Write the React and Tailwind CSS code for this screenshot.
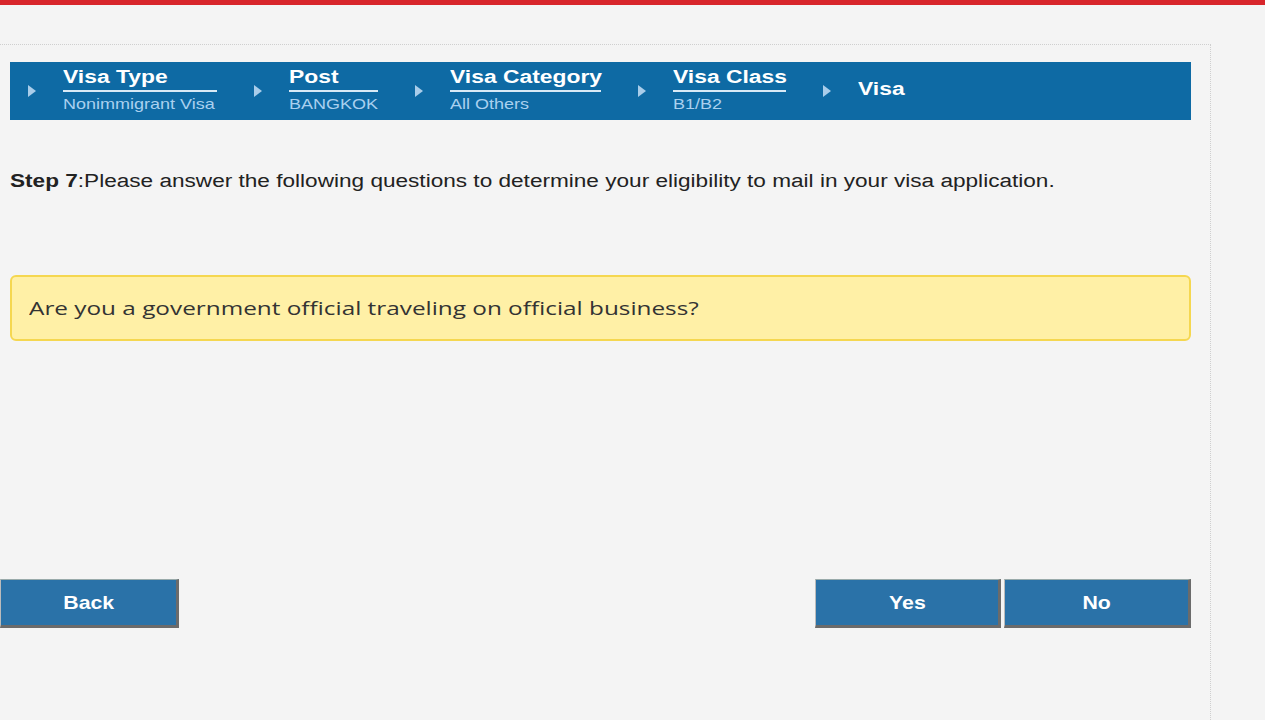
import React from "react";

const steps = [
  { title: "Visa Type", sub: "Nonimmigrant Visa", w: "w-[154px]" },
  { title: "Post", sub: "BANGKOK", w: "w-[89px]" },
  { title: "Visa Category", sub: "All Others", w: "w-[151px]" },
  { title: "Visa Class", sub: "B1/B2", w: "w-[113px]" },
];

const Arrow = () => (
  <svg width="10" height="14" viewBox="0 0 10 14" className="shrink-0">
    <path d="M1 1 L9 7 L1 13 Z" fill="#a9cdea" />
  </svg>
);

const btn =
  "h-[49px] pt-[2px] bg-[#2a72a8] border-t border-l border-t-[#9aa] border-l-[#bbb] border-r-[3px] border-b-[3px] border-r-[#6b6b6b] border-b-[#6b6b6b] text-white font-bold text-[19px]";

const App = () => {
  return (
    <div className="min-h-screen bg-white font-['Liberation_Sans',Arial,sans-serif]">
      <div className="w-[1265px] min-h-[720px] bg-[#f4f4f4]">
        {/* top red line */}
        <div className="h-[5px] bg-[#d8262b]"></div>

        <div className="mt-[39px] w-[1211px] h-[676px] border-t border-r border-dotted border-[#cfcfcf] pl-[10px] pt-[17px]">
          {/* Breadcrumb bar */}
          <div className="w-[1181px] h-[58px] bg-[#0e6aa4] flex items-center pl-[17px]">
            {steps.map((s) => (
              <div key={s.title} className="flex items-center">
                <Arrow />
                <div className={`ml-[26px] mr-[36px] ${s.w} flex flex-col`}>
                  <span className="text-white font-bold text-[18px] leading-[20px] -mt-[4px] whitespace-nowrap">
                    <span className="inline-block origin-left scale-x-[1.27]">{s.title}</span>
                  </span>
                  <div className="h-[2px] bg-[#d9eaf6] mt-[3px]"></div>
                  <span className="text-[#a9d0ef] text-[15px] leading-[17px] mt-[3px] whitespace-nowrap">
                    <span className="inline-block origin-left scale-x-[1.2]">{s.sub}</span>
                  </span>
                </div>
              </div>
            ))}
            <div className="flex items-center">
              <Arrow />
              <span className="ml-[26px] text-white font-bold text-[18px] inline-block origin-left scale-x-[1.27] mt-[-3px]">
                Visa
              </span>
            </div>
          </div>

          {/* Step text */}
          <p className="mt-[50px] text-[#222] text-[18px] leading-[22px] whitespace-nowrap">
            <span className="inline-block origin-left scale-x-[1.255]">
              <span className="font-bold">Step 7</span>:Please answer the following
              questions to determine your eligibility to mail in your visa
              application.
            </span>
          </p>

          {/* Question */}
          <div className="mt-[83px] w-[1181px] h-[66px] bg-[#fff0a6] border-2 border-[#f5d750] rounded-[6px] flex items-center pl-[17px]">
            <span className="font-['Open_Sans',sans-serif] text-[19px] text-[#333] inline-block origin-left scale-x-[1.28] whitespace-nowrap">
              Are you a government official traveling on official business?
            </span>
          </div>

          {/* Buttons */}
          <div className="mt-[238px] -ml-[10px] w-[1191px] flex justify-between">
            <button className={`w-[179px] ${btn}`}>
              <span className="inline-block scale-x-[1.12]">Back</span>
            </button>
            <div className="flex gap-[3px]">
              <button className={`w-[186px] ${btn}`}>
                <span className="inline-block scale-x-[1.12]">Yes</span>
              </button>
              <button className={`w-[187px] ${btn}`}>
                <span className="inline-block scale-x-[1.12]">No</span>
              </button>
            </div>
          </div>
        </div>
      </div>
    </div>
  );
};

export default App;
